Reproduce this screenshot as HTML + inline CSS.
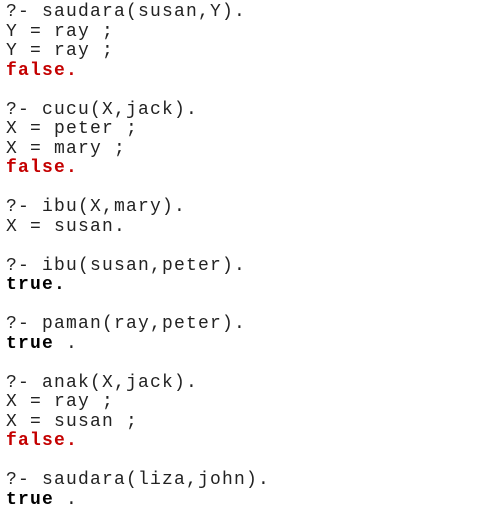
<!DOCTYPE html>
<html><head><style>
html,body{margin:0;padding:0;background:#fff;width:490px;height:518px;overflow:hidden}
pre{margin:0;padding:0 0 0 6px;font-family:"Liberation Mono","Courier New",monospace;font-size:18px;letter-spacing:1.2px;line-height:19.5px;color:#222;position:relative;top:3px}
.f{color:#c40000;font-weight:bold}
.t{color:#000;font-weight:bold}
</style></head><body><pre>?- saudara(susan,Y).
Y = ray ;
Y = ray ;
<span class="f">false.</span>

?- cucu(X,jack).
X = peter ;
X = mary ;
<span class="f">false.</span>

?- ibu(X,mary).
X = susan.

?- ibu(susan,peter).
<span class="t">true.</span>

?- paman(ray,peter).
<span class="t">true</span> .

?- anak(X,jack).
X = ray ;
X = susan ;
<span class="f">false.</span>

?- saudara(liza,john).
<span class="t">true</span> .</pre></body></html>
